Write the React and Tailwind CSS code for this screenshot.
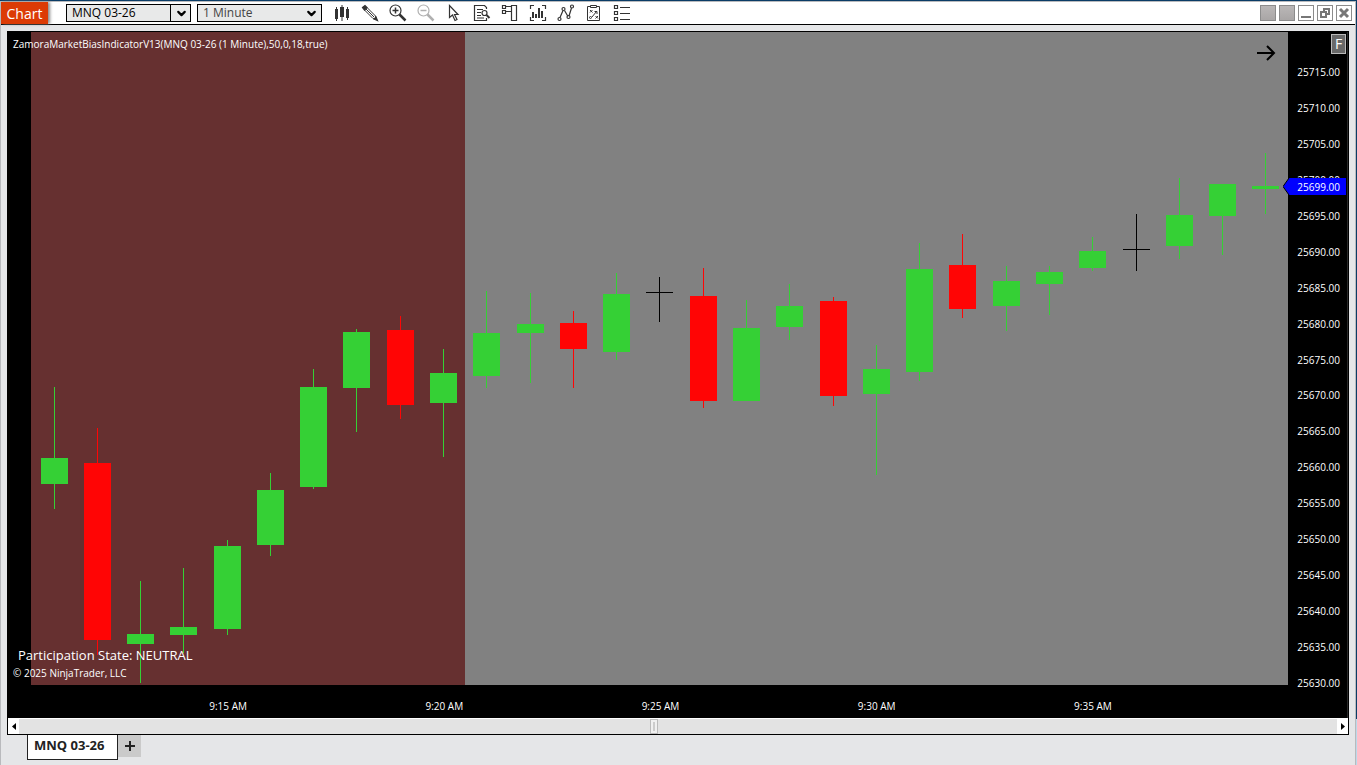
import { ChevronDown } from 'lucide-react'

// x centre, high, body top, body bottom, low, direction
const candles = [
  [54, 387, 458, 484, 509, 'up'],
  [97, 428, 463, 640, 655, 'down'],
  [140, 581, 634, 644, 683, 'up'],
  [183, 568, 627, 635, 653, 'up'],
  [227, 540, 546, 629, 635, 'up'],
  [270, 473, 490, 545, 556, 'up'],
  [313, 369, 387, 487, 489, 'up'],
  [356, 329, 332, 388, 432, 'up'],
  [400, 316, 330, 405, 419, 'down'],
  [443, 349, 373, 403, 457, 'up'],
  [486, 291, 333, 376, 388, 'up'],
  [530, 293, 324, 333, 383, 'up'],
  [573, 311, 323, 349, 388, 'down'],
  [616, 273, 294, 352, 360, 'up'],
  [659, 277, 292, 293, 322, 'flat'],
  [703, 268, 296, 401, 408, 'down'],
  [746, 300, 328, 401, 401, 'up'],
  [789, 284, 306, 327, 340, 'up'],
  [833, 297, 301, 396, 406, 'down'],
  [876, 345, 369, 394, 475, 'up'],
  [919, 243, 269, 372, 381, 'up'],
  [962, 234, 265, 309, 318, 'down'],
  [1006, 266, 281, 306, 331, 'up'],
  [1049, 266, 272, 284, 315, 'up'],
  [1092, 237, 251, 268, 271, 'up'],
  [1136, 214, 249, 250, 271, 'flat'],
  [1179, 178, 215, 246, 259, 'up'],
  [1222, 184, 184, 216, 255, 'up'],
  [1265, 153, 186, 189, 214, 'up'],
]

const candleColors = { up: '#35d035', down: '#ff0505', flat: '#000000' }

const prices = Array.from({ length: 18 }, (_, i) => (25715 - i * 5).toFixed(2))
const times = ['9:15 AM', '9:20 AM', '9:25 AM', '9:30 AM', '9:35 AM']

const tools = [
  {
    label: 'Chart style',
    art: (
      <g fill="#333" stroke="none">
        <path d="M2 5h3v10H2zM7 3h4v10H7zM13 5h3v9h-3z" />
        <path d="M3 3h1v14H3zM8.5 1h1v16h-1zM14 3h1v13h-1z" />
      </g>
    ),
  },
  {
    label: 'Drawing tools',
    art: (
      <g>
        <path d="M1.5 3.5 4 1.5l2 2L3.5 6z" fill="#333" />
        <path d="M3.500 6 6 3.500l8.500 8.500.5 3-3-.5z" strokeWidth="1" />
        <path d="m5 5 8 8" strokeWidth="1" />
        <path d="m13 15 3.500 1.500L15 13z" fill="#333" />
      </g>
    ),
  },
  {
    label: 'Zoom in',
    art: (
      <g>
        <circle cx="6.5" cy="6.5" r="5.5" />
        <path d="M3.5 6.5h6M6.5 3.5v6" strokeWidth="1.5" />
        <path d="m10.5 10.5 6 6" strokeWidth="2.5" />
      </g>
    ),
  },
  {
    label: 'Zoom out',
    color: '#b0b0b0',
    art: (
      <g>
        <circle cx="6.5" cy="6.5" r="5.5" />
        <path d="M3.5 6.5h6" strokeWidth="1.5" />
        <path d="m10.5 10.5 6 6" strokeWidth="2.5" />
      </g>
    ),
  },
  {
    label: 'Cursor',
    art: <path d="M4.5 1.5v12l3-2.5 2.5 5.5 2-1-2.5-5H13z" />,
  },
  {
    label: 'Data box',
    art: (
      <g>
        <path d="M13.5 5V3.5l-2-2h-10v15h12V14" />
        <path d="M4 5.5h6M4 8.500h4M4 11.500h4M4 14h7" />
        <circle cx="11.5" cy="9" r="2.5" />
        <path d="m13.5 11 3 3" strokeWidth="2" />
      </g>
    ),
  },
  {
    label: 'Chart trader',
    art: <path d="M10.5 1.5h5v15h-5zM1.5 1.5h3v3h-3zM1.5 6.5h3v3h-3zM4.5 2.5h6M4.5 7.5h6" />,
  },
  {
    label: 'Bars',
    art: (
      <g>
        <path d="M1.5 5V1.5H5M13 1.5h3.5V5M1.5 13v3.5H5M13 16.5h3.5V13" />
        <path d="M4 8v6M7 10v4M10 4v10M13 7v7" strokeWidth="2" />
      </g>
    ),
  },
  {
    label: 'Indicators',
    art: (
      <g>
        <path d="M3 13.5 6 6.5M7.5 6.5l3.5 6M12 12l2.5-8" />
        <circle cx="2.5" cy="15" r="1.5" />
        <circle cx="6.5" cy="5" r="1.5" />
        <circle cx="11.5" cy="13" r="1.5" />
        <circle cx="15" cy="2.5" r="1.5" />
      </g>
    ),
  },
  {
    label: 'Strategies',
    art: (
      <g strokeWidth="1">
        <path d="M5 2.5H2.5v14h12v-14H12M5.5 1.5h6v2h-6z" />
        <path d="m5 6 2.500 2.500m0-2.500L5 8.500M10.500 12l2.500 2.500m0-2.500-2.500 2.500M7 13l4.500-5.500M9.500 7.500h2.500V10" />
        <circle cx="5.5" cy="13.5" r="1" />
      </g>
    ),
  },
  {
    label: 'Properties',
    art: (
      <g>
        <path d="M1.5 1.5h3v3h-3zM1.5 7.5h3v3h-3zM1.5 13.5h3v3h-3z" />
        <path d="M7 3.5h10M7 9.5h10M7 15.5h10" />
      </g>
    ),
  },
]

function ToolButton({ label, color = '#333', art }) {
  return (
    <button aria-label={label} className="size-[18px] shrink-0">
      <svg viewBox="0 0 18 18" className="size-[18px]" fill="none" stroke={color} strokeWidth="1.2">
        {art}
      </svg>
    </button>
  )
}

function Picker({ label, value, split }) {
  return (
    <div className="relative h-[18px] w-[125px] shrink-0">
      <select
        aria-label={label}
        defaultValue={value}
        className={`block h-full w-full appearance-none border border-black bg-[#e8e9e9] pl-[5px] text-[12px] leading-4 ${split ? 'text-black' : 'text-[#444]'}`}
      >
        <option>{value}</option>
      </select>
      <span
        className={`pointer-events-none absolute inset-y-0 right-0 flex w-[21px] items-center justify-center ${split ? 'border-l border-black' : ''}`}
      >
        <ChevronDown size={13} strokeWidth={4} />
      </span>
    </div>
  )
}

function WindowButton({ label, filled, children }) {
  return (
    <button
      aria-label={label}
      className={`flex size-4 items-center justify-center border border-[#8c8c8c] ${filled ? 'bg-linear-to-b from-[#bab7b7] to-[#a9a6a6]' : 'bg-white'}`}
    >
      {children}
    </button>
  )
}

function Toolbar() {
  return (
    <header className="flex h-[23px] items-center border-b border-black bg-white pr-[3px]">
      <h1 className="flex h-[22px] w-[47px] items-center justify-center bg-[#dc3b05] text-[14px] text-white shadow-[2px_0_3px_#888]">
        Chart
      </h1>
      <div className="ml-[18px] flex gap-1.5">
        <Picker label="Instrument" value="MNQ 03-26" split />
        <Picker label="Interval" value="1 Minute" />
      </div>
      <div className="ml-[11px] flex gap-2.5">
        {tools.map((tool) => (
          <ToolButton key={tool.label} {...tool} />
        ))}
      </div>
      <div className="ml-auto flex gap-[3px]">
        <WindowButton label="Link instrument" filled />
        <WindowButton label="Link interval" filled />
        <WindowButton label="Minimize">
          <svg viewBox="0 0 14 14" className="size-3.5">
            <path d="M2 10h10v2H2z" fill="#777" />
          </svg>
        </WindowButton>
        <WindowButton label="Restore">
          <svg viewBox="0 0 14 14" className="size-3.5" fill="none" stroke="#777" strokeWidth="2">
            <path d="M6 6V3h5v5H8M3 6h5v5H3z" />
          </svg>
        </WindowButton>
        <WindowButton label="Close">
          <svg viewBox="0 0 14 14" className="size-3.5" stroke="#777" strokeWidth="3">
            <path d="m3 3 8 8M11 3l-8 8" />
          </svg>
        </WindowButton>
      </div>
    </header>
  )
}

function Candle({ x, high, top, bottom, low, dir }) {
  return (
    <g fill={candleColors[dir]}>
      <rect x={x} y={high} width="1" height={low - high} />
      <rect x={x - 13} y={top} width="27" height={bottom - top} />
    </g>
  )
}

function Plot() {
  return (
    <div className="relative flex min-h-0 flex-1 flex-col">
      <svg
        viewBox="8 32 1280 653"
        preserveAspectRatio="none"
        shapeRendering="crispEdges"
        className="block min-h-0 w-full flex-1 basis-0"
        role="img"
        aria-label="MNQ 03-26 one minute candles"
      >
        <rect x="31" y="32" width="434" height="653" fill="#663030" />
        <rect x="465" y="32" width="823" height="653" fill="#818181" />
        {candles.map(([x, high, top, bottom, low, dir]) => (
          <Candle key={x} x={x} high={high} top={top} bottom={bottom} low={low} dir={dir} />
        ))}
      </svg>
      <p className="absolute top-1 left-[5px] text-[10px] leading-4 text-white">
        ZamoraMarketBiasIndicatorV13(MNQ 03-26 (1 Minute),50,0,18,true)
      </p>
      <svg viewBox="0 0 20 16" className="absolute top-[13px] right-3 h-4 w-5" fill="none" stroke="#000" strokeWidth="2">
        <path d="M1 8h17M11 1l7 7-7 7" />
      </svg>
      <div className="absolute bottom-1 left-[5px] text-white">
        <p className="pl-[5px] text-[13px] leading-5">Participation State: NEUTRAL</p>
        <p className="text-[10px] leading-4">© 2025 NinjaTrader, LLC</p>
      </div>
    </div>
  )
}

function PriceAxis() {
  return (
    <div className="relative flex w-[60px] shrink-0 flex-col justify-between border-r border-[#2a2a2a] pt-8 pr-[7px] pb-[27px] text-right text-[10px] leading-4 text-white">
      {prices.map((price) => (
        <span key={price}>{price}</span>
      ))}
      <button className="absolute top-0.5 right-px flex h-5 w-[15px] items-center justify-center border border-[#bbb] bg-[#696969] text-[14px]">
        F
      </button>
      <div className="absolute top-[146px] right-px flex h-[17px] w-[63px] items-center justify-end pr-1.5">
        <svg viewBox="0 0 63 17" preserveAspectRatio="none" className="absolute inset-0 size-full">
          <path d="M0 8.5 6 0h57v17H6z" fill="#0000ff" />
          <path d="M6 0 0 8.5 6 17" fill="none" stroke="#000" />
        </svg>
        <span className="relative">25699.00</span>
      </div>
    </div>
  )
}

function ScrollBar() {
  return (
    <div className="flex h-4 justify-between border-t border-white bg-[#e3e3e3]">
      <button aria-label="Scroll left" className="flex w-[11px] items-center justify-center bg-white">
        <svg viewBox="0 0 4 7" className="h-[7px] w-1">
          <path d="M4 0v7L0 3.5z" />
        </svg>
      </button>
      <div className="flex flex-1 justify-center pr-12">
        <div
          role="scrollbar"
          aria-label="Chart position"
          aria-controls="chart"
          aria-valuenow={48}
          className="flex w-2 justify-center border border-[#bbb] bg-[#f0f0f0] py-0.5"
        >
          <span className="w-0.5 bg-[#ccc]" />
        </div>
      </div>
      <button aria-label="Scroll right" className="flex w-[11px] items-center justify-center bg-white">
        <svg viewBox="0 0 4 7" className="h-[7px] w-1">
          <path d="M0 0v7l4-3.5z" />
        </svg>
      </button>
    </div>
  )
}

export default function App() {
  return (
    <div className="flex min-h-screen flex-col bg-linear-to-b from-[#0a3c66] from-94% to-[#bcd9ea] to-94% pr-px font-['Open_Sans','Noto_Sans',sans-serif]">
      <div className="h-px" />
      <div className="flex flex-1 flex-col border-x border-t border-[#b9babd] bg-[#e5e6e8]">
        <Toolbar />
        <main className="flex flex-1 flex-col px-1.5 pt-1.5">
          <div className="flex flex-1 flex-col border border-black bg-black">
            <div id="chart" className="flex flex-1">
              <div className="flex min-w-0 flex-1 flex-col">
                <Plot />
                <div className="flex h-[33px] pt-[13px] pr-[87px] pl-[112px] text-[10px] leading-4 text-white">
                  {times.map((time) => (
                    <span key={time} className="flex-1 text-center">{time}</span>
                  ))}
                </div>
              </div>
              <PriceAxis />
            </div>
            <ScrollBar />
          </div>
        </main>
        <nav className="flex h-[30px] items-start pl-[26px]">
          <button className="h-[25px] w-[91px] border-x border-b border-[#222] bg-white pb-1 pl-1.5 text-left text-[13px] leading-4 font-bold text-[#222]">
            MNQ 03-26
          </button>
          <button aria-label="Add tab" className="flex h-[22px] w-[23px] items-center justify-center bg-[#cacaca]">
            <svg viewBox="0 0 10 10" className="size-2.5" stroke="#222" strokeWidth="2">
              <path d="M5 0v10M0 5h10" />
            </svg>
          </button>
        </nav>
      </div>
    </div>
  )
}
